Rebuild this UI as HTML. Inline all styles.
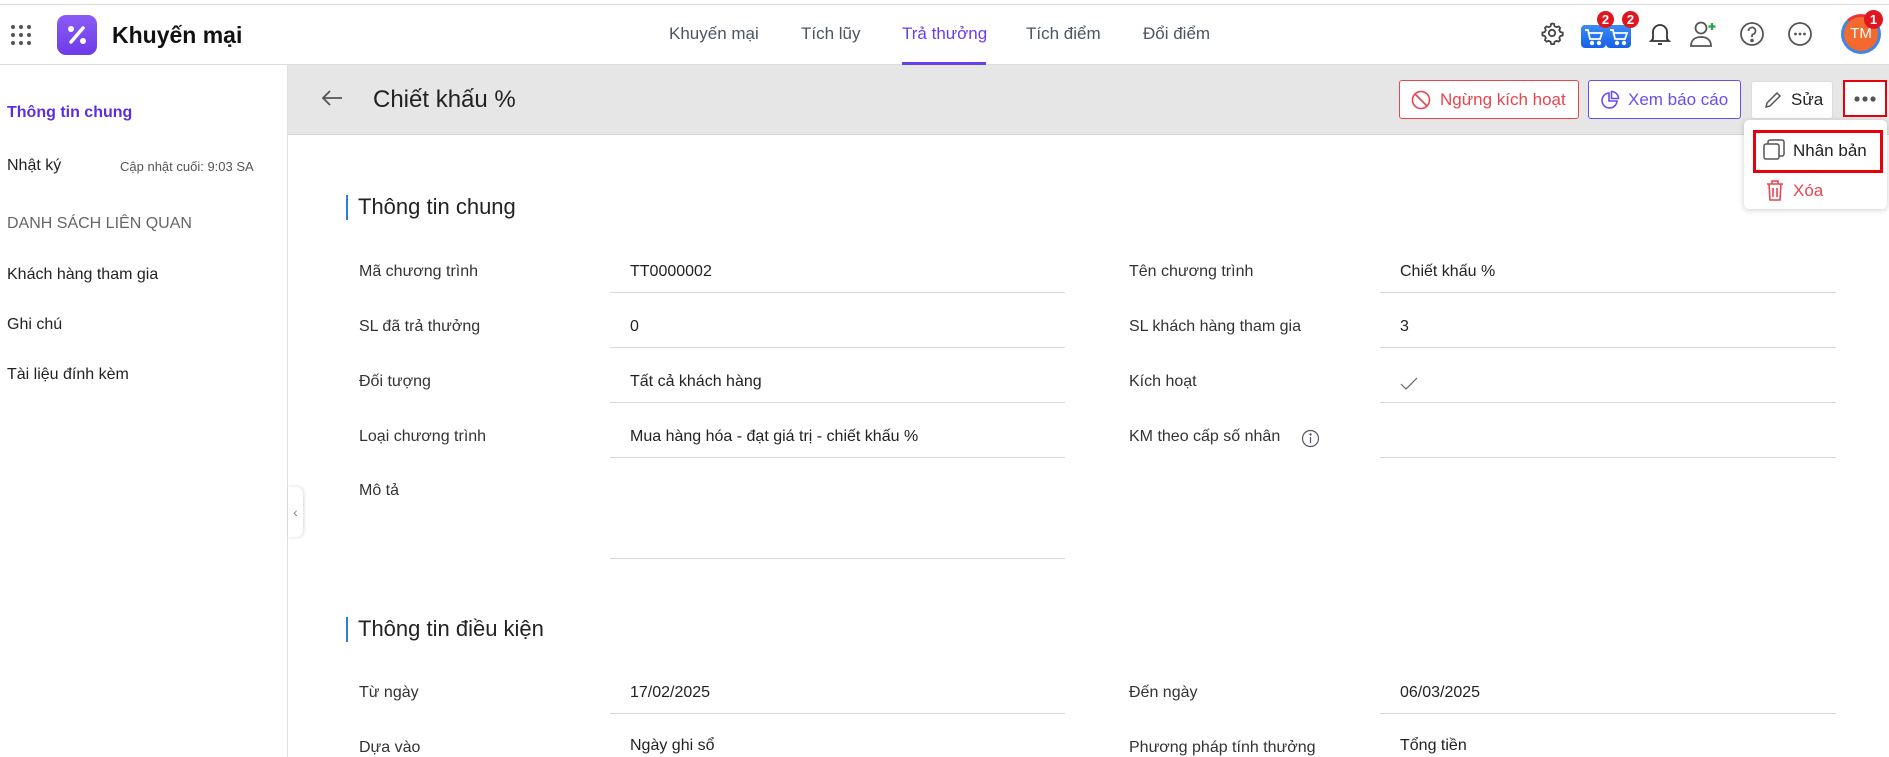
<!DOCTYPE html>
<html><head><meta charset="utf-8"><style>
*{box-sizing:border-box;margin:0;padding:0}
body{width:1889px;height:757px;overflow:hidden;background:#fff;font-family:"Liberation Sans",sans-serif;color:#212121;position:relative}
.a{position:absolute;white-space:nowrap}
.nav{font-size:17px;color:#4b5563;top:24px}
.lbl{font-size:16px;color:#333}
.val{font-size:16px;color:#222}
.ln{position:absolute;height:1px;background:#d4d8df}
.sb{font-size:16px;left:7px;color:#222}
.btn{position:absolute;border:1px solid;border-radius:3px;background:#fff;font-size:17px;display:flex;align-items:center}
</style></head><body>
<div class="a" style="left:0;top:4px;width:1889px;height:1px;background:#ddd"></div>
<div class="a" style="left:0;top:64px;width:1889px;height:1px;background:#ddd"></div>
<svg class="a" style="left:10px;top:24px" width="24" height="24"><g fill="#555"><circle cx="3" cy="3" r="2"/><circle cx="11" cy="3" r="2"/><circle cx="19" cy="3" r="2"/><circle cx="3" cy="11" r="2"/><circle cx="11" cy="11" r="2"/><circle cx="19" cy="11" r="2"/><circle cx="3" cy="19" r="2"/><circle cx="11" cy="19" r="2"/><circle cx="19" cy="19" r="2"/></g></svg>
<div class="a" style="left:57px;top:15px;width:40px;height:40px;border-radius:9px;background:linear-gradient(#8b5cf6,#6d3be8)"></div>
<svg class="a" style="left:57px;top:15px" width="40" height="40"><g stroke="#fff" stroke-width="3.5" stroke-linecap="round"><line x1="14" y1="27" x2="26" y2="13"/></g><circle cx="14" cy="14" r="3" fill="#fff"/><circle cx="26" cy="26" r="3" fill="#fff"/></svg>
<div class="a" style="left:112px;top:22px;font-size:23px;font-weight:bold;color:#111">Khuyến mại</div>
<div class="a nav" style="left:669px">Khuyến mại</div>
<div class="a nav" style="left:801px">Tích lũy</div>
<div class="a nav" style="left:902px;color:#6a3df0">Trả thưởng</div>
<div class="a" style="left:902px;top:62px;width:84px;height:3px;background:#6a3df0"></div>
<div class="a nav" style="left:1026px">Tích điểm</div>
<div class="a nav" style="left:1143px">Đổi điểm</div>
<svg class="a" style="left:1540px;top:21px" width="24" height="24" viewBox="0 0 24 24" fill="none" stroke="#444" stroke-width="1.8"><circle cx="12" cy="12" r="3.2"/><path d="M12 2.5l2 .3.6 2.4 1.8 1 2.3-.8 1.4 1.5-.8 2.3 1 1.8 2.4.6v2.8l-2.4.6-1 1.8.8 2.3-1.4 1.5-2.3-.8-1.8 1-.6 2.4h-2.8l-.6-2.4-1.8-1-2.3.8-1.5-1.5.8-2.3-1-1.8-2.4-.6v-2.8l2.4-.6 1-1.8-.8-2.3 1.5-1.5 2.3.8 1.8-1 .6-2.4z"/></svg>
<div class="a" style="left:1581px;top:25px;width:25px;height:23px;border-radius:4px;background:linear-gradient(#3b8cf6,#1760e8)"></div>
<div class="a" style="left:1606px;top:25px;width:25px;height:23px;border-radius:4px;background:linear-gradient(#3b8cf6,#1760e8)"></div>
<svg class="a" style="left:1584px;top:28px" width="20" height="18" fill="none" stroke="#fff" stroke-width="1.8"><path d="M1 2h3l2 9h10l2-6H5"/><circle cx="8" cy="15" r="1.3" fill="#fff"/><circle cx="15" cy="15" r="1.3" fill="#fff"/></svg>
<svg class="a" style="left:1609px;top:28px" width="20" height="18" fill="none" stroke="#fff" stroke-width="1.8"><path d="M1 2h3l2 9h10l2-6H5"/><circle cx="8" cy="15" r="1.3" fill="#fff"/><circle cx="15" cy="15" r="1.3" fill="#fff"/></svg>
<div class="a" style="left:1597px;top:11px;width:17px;height:17px;border-radius:50%;background:#e0161e;color:#fff;font-size:13px;font-weight:bold;text-align:center;line-height:17px">2</div>
<div class="a" style="left:1622px;top:11px;width:17px;height:17px;border-radius:50%;background:#e0161e;color:#fff;font-size:13px;font-weight:bold;text-align:center;line-height:17px">2</div>
<svg class="a" style="left:1648px;top:21px" width="24" height="26" viewBox="0 0 24 26" fill="none" stroke="#333" stroke-width="1.8"><path d="M5 18V11a7 7 0 0 1 14 0v7l2 2H3z"/><path d="M10 23h4"/></svg>
<svg class="a" style="left:1689px;top:18px" width="30" height="30" viewBox="0 0 30 30" fill="none" stroke="#555" stroke-width="1.8"><circle cx="12" cy="10" r="5.5"/><path d="M2 28c0-6 4-9 10-9s10 3 10 9z"/><path d="M23 5v7M19.5 8.5h7" stroke="#22a845" stroke-width="2.2"/></svg>
<svg class="a" style="left:1739px;top:21px" width="26" height="26" fill="none" stroke="#555" stroke-width="1.8"><circle cx="13" cy="13" r="11"/><path d="M9.5 10a3.5 3.5 0 1 1 4.5 3.3c-.8.3-1 .9-1 1.7v1"/><circle cx="13" cy="19.5" r=".9" fill="#555"/></svg>
<svg class="a" style="left:1787px;top:21px" width="26" height="26" fill="none" stroke="#555" stroke-width="1.8"><circle cx="13" cy="13" r="11"/><g fill="#555" stroke="none"><circle cx="8.5" cy="13" r="1.4"/><circle cx="13" cy="13" r="1.4"/><circle cx="17.5" cy="13" r="1.4"/></g></svg>
<div class="a" style="left:1841px;top:14px;width:40px;height:40px;border-radius:50%;border:3px solid #3f86e8;border-top-color:#e33;background:#f26a2e;color:#fff;font-size:15px;text-align:center;line-height:34px">TM</div>
<div class="a" style="left:1864px;top:10px;width:19px;height:19px;border-radius:50%;background:#e0161e;color:#fff;font-size:13px;font-weight:bold;text-align:center;line-height:19px">1</div>
<div class="a" style="left:287px;top:65px;width:1px;height:692px;background:#dcdfe4"></div>
<div class="a sb" style="top:104px;color:#5b2ee6;font-weight:bold">Thông tin chung</div>
<div class="a sb" style="top:157px">Nhật ký</div>
<div class="a" style="left:120px;top:159px;font-size:13px;color:#555">Cập nhật cuối: 9:03 SA</div>
<div class="a sb" style="top:215px;color:#666">DANH SÁCH LIÊN QUAN</div>
<div class="a sb" style="top:266px">Khách hàng tham gia</div>
<div class="a sb" style="top:316px">Ghi chú</div>
<div class="a sb" style="top:366px">Tài liệu đính kèm</div>
<div class="a" style="left:288px;top:487px;width:15px;height:50px;border-radius:0 6px 6px 0;background:#fff;box-shadow:1px 0 3px rgba(0,0,0,.15);color:#888;font-size:14px;text-align:center;line-height:50px">‹</div>
<div class="a" style="left:288px;top:65px;width:1601px;height:70px;background:#e6e6e6;border-bottom:1px solid #d5d5d5"></div>
<svg class="a" style="left:321px;top:89px" width="22" height="18" fill="none" stroke="#555" stroke-width="1.8"><path d="M21 9H2M9 2L2 9l7 7"/></svg>
<div class="a" style="left:373px;top:86px;font-size:24px;color:#222">Chiết khấu %</div>
<div class="btn" style="left:1399px;top:80px;width:180px;height:39px;border-color:#e8454d;color:#e8454d"><svg style="margin:0 9px 0 11px" width="20" height="20" fill="none" stroke="#e8454d" stroke-width="1.6"><circle cx="10" cy="10" r="8.5"/><path d="M4 4l12 12"/></svg>Ngừng kích hoạt</div>
<div class="btn" style="left:1588px;top:80px;width:153px;height:39px;border-color:#6a4cf0;color:#6a4cf0"><svg style="margin:0 8px 0 11px" width="20" height="20" fill="none" stroke="#6a4cf0" stroke-width="1.6"><path d="M9 3a7.5 7.5 0 1 0 8 8H9z"/><path d="M11.5 1.5v7h7a7 7 0 0 0-7-7z"/></svg>Xem báo cáo</div>
<div class="btn" style="left:1751px;top:81px;width:82px;height:38px;border-color:#ddd;color:#222"><svg style="margin:0 9px 0 12px" width="18" height="18" fill="none" stroke="#555" stroke-width="1.5"><path d="M2 16l1-4L13 2l3 3L6 15z"/></svg>Sửa</div>
<div class="a" style="left:1843px;top:80px;width:44px;height:37px;border:2px solid #e8000b;background:#fff"></div>
<svg class="a" style="left:1853px;top:95px" width="24" height="8"><g fill="#555"><circle cx="4" cy="4" r="2.6"/><circle cx="12" cy="4" r="2.6"/><circle cx="20" cy="4" r="2.6"/></g></svg>
<div class="a" style="left:1744px;top:120px;width:143px;height:89px;background:#fff;border-radius:5px;box-shadow:0 1px 6px rgba(0,0,0,.2)"></div>
<div class="a" style="left:1753px;top:130px;width:130px;height:43px;border:3px solid #e8000b"></div>
<svg class="a" style="left:1763px;top:139px" width="22" height="22" fill="none" stroke="#555" stroke-width="1.5"><rect x="1" y="5" width="15" height="15" rx="2"/><path d="M5 5V3a2 2 0 0 1 2-2h12a2 2 0 0 1 2 2v12a2 2 0 0 1-2 2h-3"/></svg>
<div class="a" style="left:1793px;top:141px;font-size:17px;color:#222">Nhân bản</div>
<svg class="a" style="left:1766px;top:180px" width="18" height="21" fill="none" stroke="#e8454d" stroke-width="1.6"><path d="M1 4h16M6 4V1h6v3M3 4l1 16h10l1-16M7 8v9M11 8v9"/></svg>
<div class="a" style="left:1793px;top:181px;font-size:17px;color:#e8454d">Xóa</div>
<div class="a" style="left:346px;top:195px;width:2px;height:25px;background:#2a7de1"></div>
<div class="a" style="left:358px;top:194px;font-size:22px;color:#222">Thông tin chung</div>
<div class="a lbl" style="left:359px;top:263px">Mã chương trình</div><div class="a val" style="left:630px;top:263px">TT0000002</div><div class="ln" style="left:610px;top:292px;width:455px"></div>
<div class="a lbl" style="left:359px;top:318px">SL đã trả thưởng</div><div class="a val" style="left:630px;top:318px">0</div><div class="ln" style="left:610px;top:347px;width:455px"></div>
<div class="a lbl" style="left:359px;top:373px">Đối tượng</div><div class="a val" style="left:630px;top:373px">Tất cả khách hàng</div><div class="ln" style="left:610px;top:402px;width:455px"></div>
<div class="a lbl" style="left:359px;top:428px">Loại chương trình</div><div class="a val" style="left:630px;top:428px">Mua hàng hóa - đạt giá trị - chiết khấu %</div><div class="ln" style="left:610px;top:457px;width:455px"></div>
<div class="a lbl" style="left:359px;top:482px">Mô tả</div><div class="ln" style="left:610px;top:558px;width:455px"></div>
<div class="a lbl" style="left:1129px;top:263px">Tên chương trình</div><div class="a val" style="left:1400px;top:263px">Chiết khấu %</div><div class="ln" style="left:1380px;top:292px;width:456px"></div>
<div class="a lbl" style="left:1129px;top:318px">SL khách hàng tham gia</div><div class="a val" style="left:1400px;top:318px">3</div><div class="ln" style="left:1380px;top:347px;width:456px"></div>
<div class="a lbl" style="left:1129px;top:373px">Kích hoạt</div><svg class="a" style="left:1400px;top:377px" width="18" height="14" fill="none" stroke="#666" stroke-width="1.2"><path d="M1 7l5 5L17 1"/></svg><div class="ln" style="left:1380px;top:402px;width:456px"></div>
<div class="a lbl" style="left:1129px;top:428px">KM theo cấp số nhân</div><svg class="a" style="left:1301px;top:429px" width="19" height="19" fill="none" stroke="#556" stroke-width="1.2"><circle cx="9.5" cy="9.5" r="8"/><path d="M9.5 8v6"/><circle cx="9.5" cy="5.5" r=".6" fill="#556"/></svg><div class="ln" style="left:1380px;top:457px;width:456px"></div>
<div class="a" style="left:346px;top:617px;width:2px;height:25px;background:#2a7de1"></div>
<div class="a" style="left:358px;top:616px;font-size:22px;color:#222">Thông tin điều kiện</div>
<div class="a lbl" style="left:359px;top:684px">Từ ngày</div><div class="a val" style="left:630px;top:684px">17/02/2025</div><div class="ln" style="left:610px;top:713px;width:455px"></div>
<div class="a lbl" style="left:359px;top:739px">Dựa vào</div><div class="a val" style="left:630px;top:737px">Ngày ghi sổ</div>
<div class="a lbl" style="left:1129px;top:684px">Đến ngày</div><div class="a val" style="left:1400px;top:684px">06/03/2025</div><div class="ln" style="left:1380px;top:713px;width:456px"></div>
<div class="a lbl" style="left:1129px;top:739px">Phương pháp tính thưởng</div><div class="a val" style="left:1400px;top:737px">Tổng tiền</div>
</body></html>
